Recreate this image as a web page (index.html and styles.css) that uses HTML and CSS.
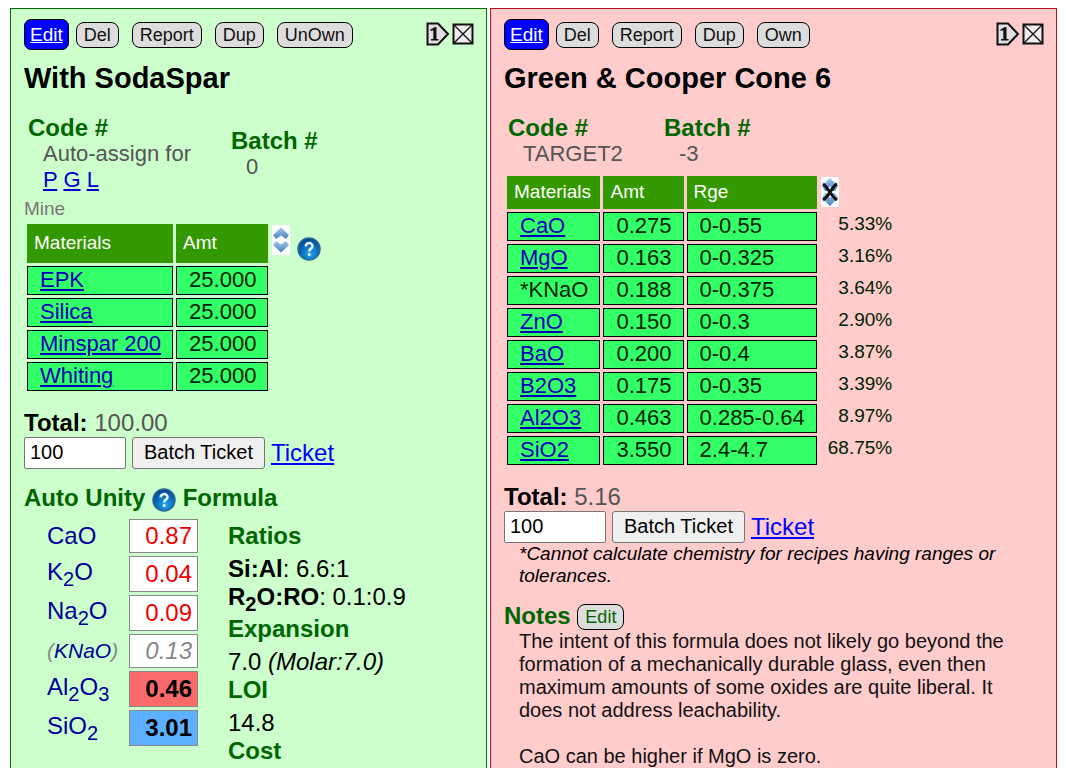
FILE: index.html
```html
<!DOCTYPE html>
<html lang="en">
<head>
<meta charset="utf-8">
<title>Recipes</title>
<link rel="stylesheet" href="styles.css">
</head>
<body>
<svg class="defs" width="0" height="0" aria-hidden="true">
  <defs>
    <linearGradient id="chev" x1="0" y1="0" x2="0" y2="1"><stop offset="0" stop-color="#a3c8ec"/><stop offset="1" stop-color="#4681bd"/></linearGradient>
    <radialGradient id="ball" cx=".55" cy=".7" r=".65"><stop offset="0" stop-color="#21a5ee"/><stop offset=".65" stop-color="#0868b8"/><stop offset="1" stop-color="#07458c"/></radialGradient>
    <symbol id="tag" viewBox="0 0 24 24"><path d="M1.5 1.5H12L22 12 12 22.500H1.500Z" fill="#e2dde2" stroke="#111" stroke-width="2"/><path d="M4.500 7.500 9 5H10.500V17H12.500V18.500H5V17H7.300V8.300L4.500 9Z" fill="#111"/></symbol>
    <symbol id="cross" viewBox="0 0 22 22"><path d="M1.500 1.500H20.500V20.500H1.500Z" fill="#efebef" stroke="#111" stroke-width="2"/><path d="M2 2 20 20M20 2 2 20" stroke="#111" stroke-width="1.300"/></symbol>
    <symbol id="help" viewBox="0 0 24 24"><circle cx="12" cy="12" r="11" fill="url(#ball)" stroke="#2d6a94" stroke-width="1.500"/><path d="M8.700 9.500C8.700 5 15.500 5.100 15.500 9.200 15.500 11.700 12.200 11.500 12.200 14.500" fill="none" stroke="#e8f6ff" stroke-width="2.500"/><circle cx="12.200" cy="17.500" r="1.500" fill="#e8f6ff"/></symbol>
    <symbol id="sort" viewBox="0 0 18 30"><path d="M0 0H18V30H0Z" fill="#fff"/><path d="M9 2.500 17 10 14 14 9 10.500 4 14 1 10Z" fill="url(#chev)"/><path d="M4 16 9 19.500 14 16 17 20 9 27.500 1 20Z" fill="url(#chev)"/></symbol>
    <symbol id="unsort" viewBox="0 0 18 30"><path d="M0 0H18V30H0Z" fill="#fff"/><path d="M9 1 17 9 14 14H4L1 9Z" fill="url(#chev)"/><path d="M4 16H14L17 21 9 29 1 21Z" fill="url(#chev)"/><path d="M7 12 9 9 11 12ZM7 18 9 21 11 18Z" fill="#fff"/><path d="M2 7C6 9 10 19 16 23M16 7C11 9 8 20 2 23" fill="none" stroke="#111" stroke-width="3"/></symbol>
  </defs>
</svg>

<section class="panel mine">
  <div class="toolbar">
    <a class="edit" href="#">Edit</a>
    <div class="actions">
      <button class="pill">Del</button>
      <button class="pill">Report</button>
      <button class="pill">Dup</button>
      <button class="pill">UnOwn</button>
    </div>
    <button class="icon" aria-label="Position 1"><svg width="24" height="24"><use href="#tag"/></svg></button>
    <button class="icon" aria-label="Close"><svg width="22" height="22"><use href="#cross"/></svg></button>
  </div>
  <h1>With SodaSpar</h1>
  <div class="codes">
    <dl class="code">
      <dt>Code #</dt>
      <dd>Auto-assign for <br><a href="#">P</a> <a href="#">G</a> <a href="#">L</a></dd>
    </dl>
    <dl><dt>Batch #</dt><dd>0</dd></dl>
  </div>
  <p class="owner">Mine</p>
  <div class="recipe">
    <table class="materials tall">
      <thead><tr><th>Materials</th><th>Amt</th></tr></thead>
      <tbody>
        <tr><td><a href="#">EPK</a></td><td>25.000</td></tr>
        <tr><td><a href="#">Silica</a></td><td>25.000</td></tr>
        <tr><td><a href="#">Minspar 200</a></td><td>25.000</td></tr>
        <tr><td><a href="#">Whiting</a></td><td>25.000</td></tr>
      </tbody>
    </table>
    <div class="tools">
      <button class="icon" aria-label="Reorder"><svg width="18" height="30"><use href="#sort"/></svg></button>
      <button class="icon low" aria-label="Help"><svg width="24" height="24"><use href="#help"/></svg></button>
    </div>
  </div>
  <p class="total"><b>Total:</b> <span>100.00</span></p>
  <form class="batch">
    <input type="text" value="100" aria-label="Batch size">
    <button type="button">Batch Ticket</button>
    <a href="#">Ticket</a>
  </form>
  <h2>Auto Unity <button class="icon" aria-label="Help"><svg width="24" height="24"><use href="#help"/></svg></button> Formula</h2>
  <div class="analysis">
    <table class="formula">
      <tr><th>CaO</th><td>0.87</td></tr>
      <tr class="deep"><th>K<sub>2</sub>O</th><td>0.04</td></tr>
      <tr class="deep"><th>Na<sub>2</sub>O</th><td>0.09</td></tr>
      <tr class="sum"><th>(<span>KNaO</span>)</th><td>0.13</td></tr>
      <tr class="deep"><th>Al<sub>2</sub>O<sub>3</sub></th><td class="alumina">0.46</td></tr>
      <tr class="deep"><th>SiO<sub>2</sub></th><td class="silica">3.01</td></tr>
    </table>
    <div class="results">
      <h2>Ratios</h2>
      <p><b>Si:Al</b>: 6.6:1</p>
      <p class="next"><b>R<sub>2</sub>O:RO</b>: 0.1:0.9</p>
      <h2>Expansion</h2>
      <p>7.0 <i>(Molar:7.0)</i></p>
      <h2>LOI</h2>
      <p>14.8</p>
      <h2>Cost</h2>
    </div>
  </div>
</section>

<section class="panel target">
  <div class="toolbar">
    <a class="edit" href="#">Edit</a>
    <div class="actions">
      <button class="pill">Del</button>
      <button class="pill">Report</button>
      <button class="pill">Dup</button>
      <button class="pill">Own</button>
    </div>
    <button class="icon" aria-label="Position 1"><svg width="24" height="24"><use href="#tag"/></svg></button>
    <button class="icon" aria-label="Close"><svg width="22" height="22"><use href="#cross"/></svg></button>
  </div>
  <h1>Green &amp; Cooper Cone 6</h1>
  <div class="codes">
    <dl class="code"><dt>Code #</dt><dd>TARGET2</dd></dl>
    <dl><dt>Batch #</dt><dd>-3</dd></dl>
  </div>
  <table class="materials">
    <thead><tr><th>Materials</th><th>Amt</th><th>Rge</th><td class="order"><button class="icon" aria-label="Clear order"><svg width="18" height="30"><use href="#unsort"/></svg></button></td></tr></thead>
    <tbody>
      <tr><td><a href="#">CaO</a></td><td>0.275</td><td>0-0.55</td><td class="pct">5.33%</td></tr>
      <tr><td><a href="#">MgO</a></td><td>0.163</td><td>0-0.325</td><td class="pct">3.16%</td></tr>
      <tr><td>*KNaO</td><td>0.188</td><td>0-0.375</td><td class="pct">3.64%</td></tr>
      <tr><td><a href="#">ZnO</a></td><td>0.150</td><td>0-0.3</td><td class="pct">2.90%</td></tr>
      <tr><td><a href="#">BaO</a></td><td>0.200</td><td>0-0.4</td><td class="pct">3.87%</td></tr>
      <tr><td><a href="#">B2O3</a></td><td>0.175</td><td>0-0.35</td><td class="pct">3.39%</td></tr>
      <tr><td><a href="#">Al2O3</a></td><td>0.463</td><td>0.285-0.64</td><td class="pct">8.97%</td></tr>
      <tr><td><a href="#">SiO2</a></td><td>3.550</td><td>2.4-4.7</td><td class="pct">68.75%</td></tr>
    </tbody>
  </table>
  <p class="total"><b>Total:</b> <span>5.16</span></p>
  <form class="batch">
    <input type="text" value="100" aria-label="Batch size">
    <button type="button">Batch Ticket</button>
    <a href="#">Ticket</a>
  </form>
  <p class="warning">*Cannot calculate chemistry for recipes having ranges or tolerances.</p>
  <h2>Notes <button class="pill">Edit</button></h2>
  <div class="notes">
    <p>The intent of this formula does not likely go beyond the formation of a mechanically durable glass, even then maximum amounts of some oxides are quite liberal. It does not address leachability.</p>
    <p>CaO can be higher if MgO is zero.</p>
  </div>
</section>
</body>
</html>
```

FILE: styles.css
```css
* { box-sizing: border-box; }

body {
  display: flex;
  align-items: stretch;
  gap: 3px;
  min-height: 100vh;
  margin: 0;
  padding: 8px 9px 0 10px;
  background: #fff;
  color: #000;
  font-family: "Liberation Sans", Arial, sans-serif;
  font-size: 24px;
  line-height: 28px;
}

.defs { position: absolute; }

h1, h2, p, dl, dt, dd { margin: 0; }
a { color: #00c; }
button { font-family: inherit; }

.panel {
  min-width: 0;
  padding: 10px 12px 0 13px;
  border: 1px solid;
  border-bottom: 0;
}
.mine { flex: 450 1 0; background: #cfc; border-color: #007000; }
.target { flex: 540 1 0; background: #fcc; border-color: #c01020; }

.toolbar { display: flex; align-items: center; height: 30px; gap: 2px; }
.actions { display: flex; flex: 1; gap: 13px; padding: 2px 0 0 5px; }
.edit {
  padding: 1px 5px 0;
  border: 1px solid #000;
  border-radius: 7px;
  background: #00f;
  color: #fff;
  font-size: 19px;
}
.pill {
  height: 26px;
  padding: 0 7px;
  border: 1px solid #000;
  border-radius: 8px;
  background: #ddd;
  color: #111;
  font-size: 18px;
  line-height: 24px;
}
.icon { padding: 0; border: 0; background: none; line-height: 0; }
.icon svg { display: block; }

h1 { margin-top: 12px; font-size: 29px; line-height: 34px; }
h2 { color: #060; font-size: 24px; line-height: 28px; }

.codes { display: flex; align-items: center; margin-top: 20px; padding-left: 4px; line-height: 26px; }
.code { width: 203px; }
.target .code { width: 156px; }
dt { color: #060; font-weight: bold; }
dd { padding-left: 15px; color: #555; font-size: 22px; }

.owner { margin-top: 4px; color: #777; font-size: 19px; line-height: 24px; }
.recipe { display: flex; align-items: flex-start; }
.tools { display: flex; align-items: flex-start; gap: 7px; padding: 4px 0 0 1px; }
.low { padding-top: 12px; }

.materials { border-spacing: 3px; font-size: 22px; line-height: 25px; }
.materials th {
  height: 33px;
  padding: 0 7px 2px;
  background: #390;
  color: #fff;
  font-size: 19px;
  font-weight: normal;
  text-align: left;
}
.materials.tall th { height: 39px; }
.materials td { padding: 0 11px 2px 12px; border: 1px solid #000; background: #3f6; color: #020; }
.materials a { color: #00b; }
.target .materials { margin-top: 6px; }
.materials .order { padding: 1px 1px; border: 0; background: none; vertical-align: top; }
.order .icon { display: block; }
.materials .pct {
  padding: 1px 0 0 8px;
  border: 0;
  background: none;
  font-size: 19px;
  line-height: 22px;
  text-align: right;
  vertical-align: top;
}

.total { margin-top: 15px; }
.total span { color: #555; }
.batch { display: flex; align-items: center; gap: 6px; height: 32px; }
.batch input {
  width: 102px;
  height: 32px;
  padding: 0 5px 2px;
  border: 1px solid #767676;
  border-radius: 2px;
  background: #fff;
  font-family: inherit;
  font-size: 20px;
}
.batch button {
  height: 32px;
  padding: 0 11px 2px;
  border: 1px solid #767676;
  border-radius: 3px;
  background: #efefef;
  color: #000;
  font-size: 20px;
}
.batch a { color: #00f; }
.panel > h2 { margin-top: 15px; }
.panel > h2 .icon { vertical-align: middle; }
.panel > h2 .pill { color: #060; vertical-align: bottom; }

.analysis { display: flex; align-items: flex-start; gap: 27px; padding: 4px 0 0 20px; }
sub { line-height: 20px; }
.formula { border-spacing: 3px; }
.formula th { min-width: 79px; padding: 0 6px 0 0; color: #009; font-weight: normal; text-align: left; }
.formula td {
  width: 69px;
  padding: 2px 5px;
  border: 1px solid #888;
  background: #fff;
  color: #e00;
  text-align: right;
}
.formula .deep td { height: 36px; }
.formula .deep th { padding-bottom: 2px; }
.formula .sum th, .formula .sum td { color: #888; font-style: italic; }
.formula .sum th { font-size: 21px; }
.formula .sum span { color: #009; }
.formula .alumina, .formula .silica { color: #000; font-weight: bold; }
.formula .alumina { background: #fb6a6a; }
.formula .silica { background: #5cb0ff; }
.results { padding-top: 6px; }
.results p { padding: 5px 0 0; }
.results .next { padding: 0 0 1px; }

.warning { padding-left: 15px; font-size: 19px; font-style: italic; line-height: 22px; }
.notes { padding: 0 15px; color: #111; font-size: 20px; line-height: 23px; }
.notes p + p { margin-top: 23px; }
```
